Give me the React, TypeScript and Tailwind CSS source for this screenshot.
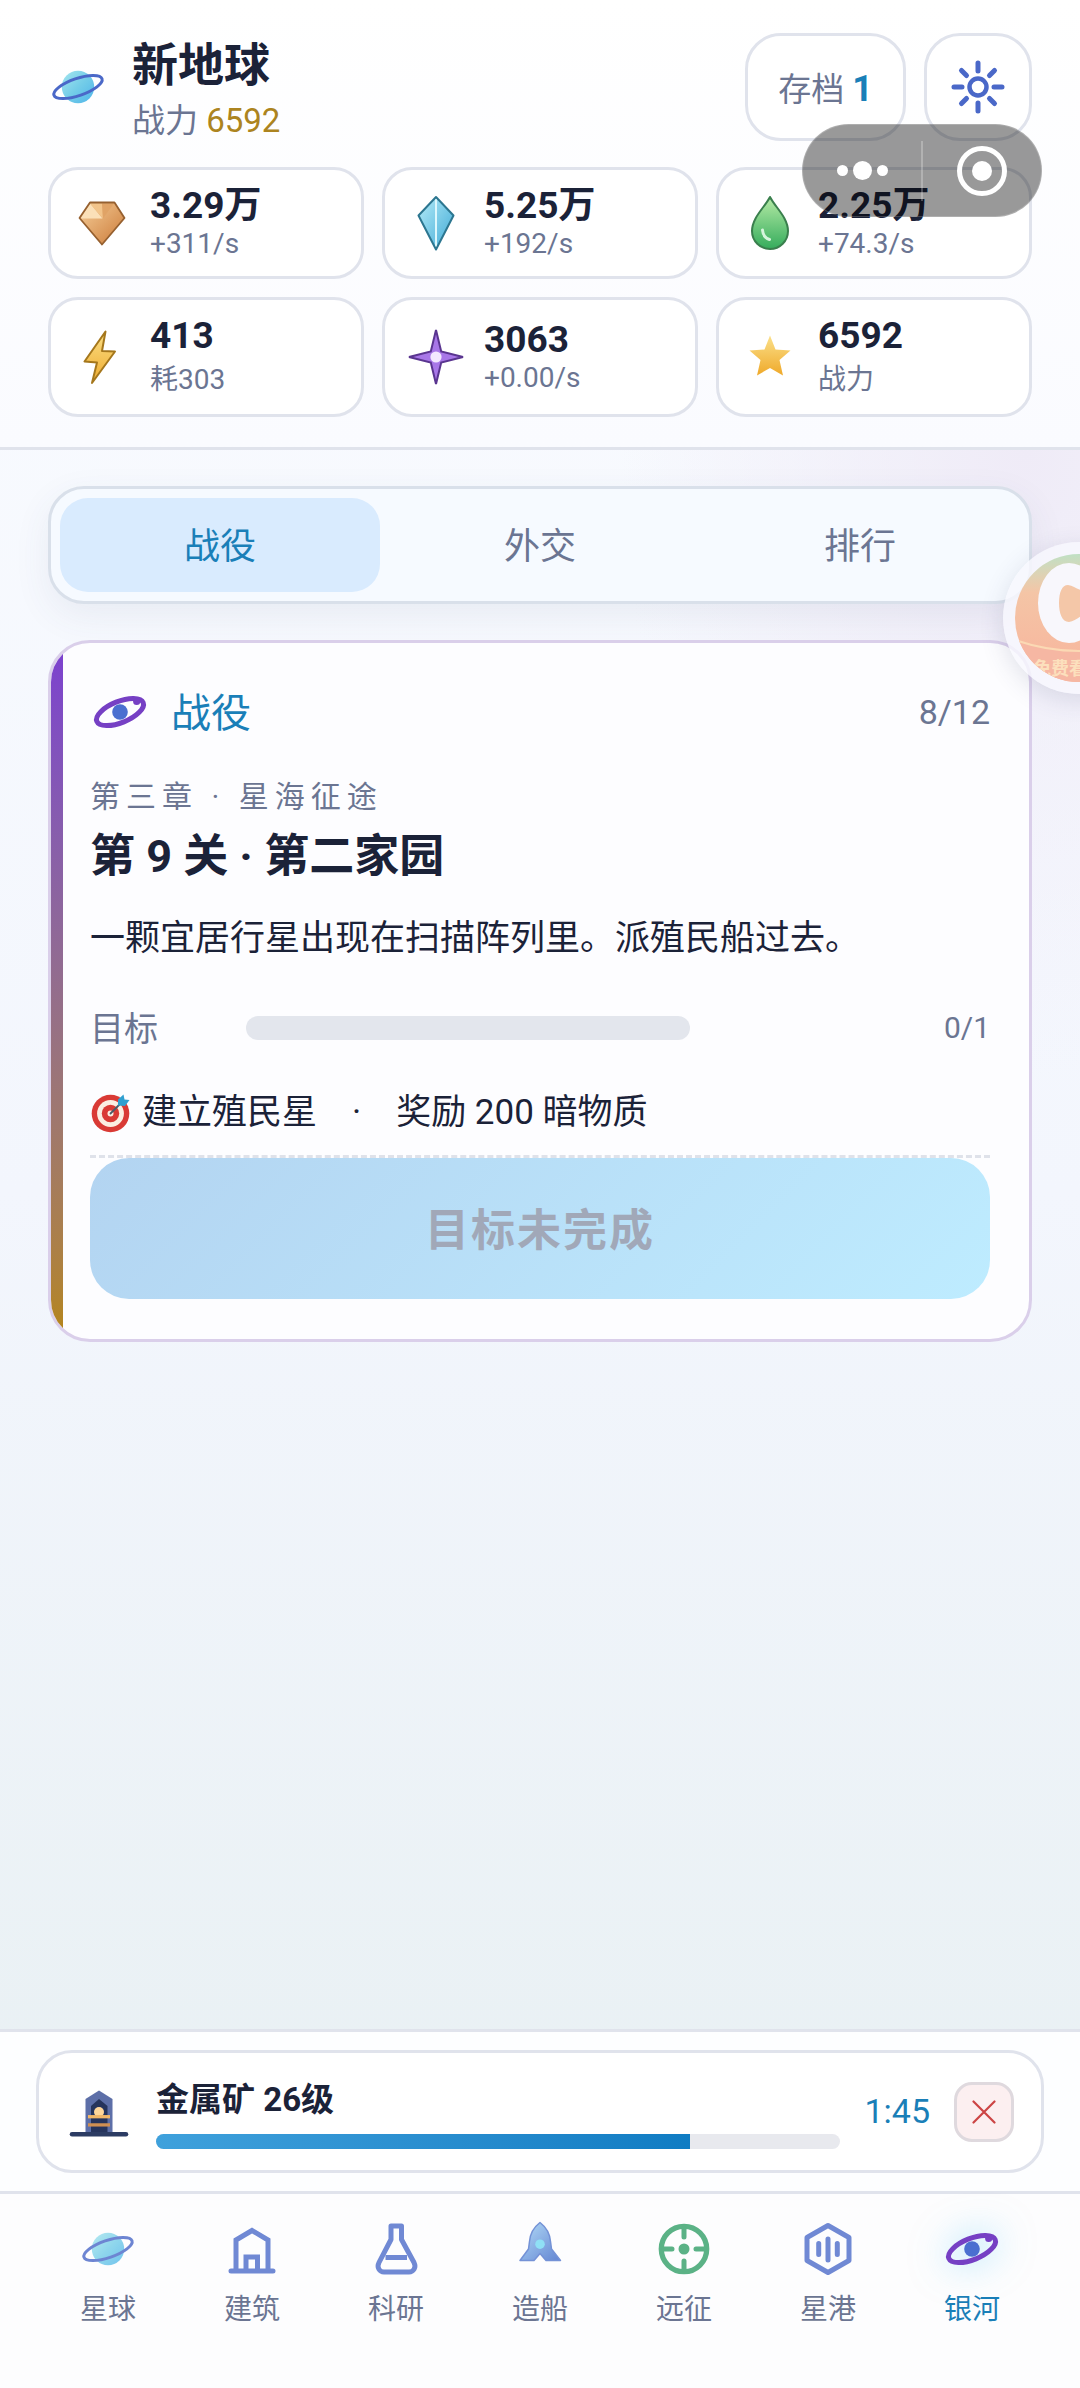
import React, { useState } from 'react'
import clsx from 'clsx'

type IconProps = { className?: string }

const Svg: React.FC<IconProps & { children: React.ReactNode }> = ({ className, children }) => (
  <svg viewBox="0 0 60 60" fill="none" aria-hidden="true" className={clsx('size-[60px] shrink-0 overflow-visible', className)}>
    {children}
  </svg>
)

const PlanetIcon: React.FC<IconProps> = ({ className }) => (
  <Svg className={className}>
    <defs>
      <linearGradient id="planet" x1="0" y1="0" x2="1" y2="1">
        <stop offset="0" stopColor="#a5e6ef" />
        <stop offset="0.5" stopColor="#74cde8" />
        <stop offset="1" stopColor="#4fb5ea" />
      </linearGradient>
    </defs>
    <circle cx="30" cy="30" r="16.2" fill="url(#planet)" />
    <ellipse cx="30" cy="30" rx="25.4" ry="8.6" transform="rotate(-19 30 30)" stroke="#4a68c8" strokeWidth="3" />
  </Svg>
)

const GalaxyIcon: React.FC<IconProps> = ({ className }) => (
  <Svg className={className}>
    <ellipse cx="30" cy="30" rx="25" ry="10.6" transform="rotate(-22 30 30)" stroke="#7640c4" strokeWidth="5" />
    <circle cx="30" cy="30" r="7.8" fill="#4a6fd0" />
    <circle cx="46.7" cy="19.5" r="3.6" fill="#7640c4" />
  </Svg>
)

const SunIcon = () => (
  <Svg>
    <g stroke="#4a68c8" strokeWidth="5" strokeLinecap="round">
      <circle cx="30" cy="30" r="8.5" strokeWidth="4.5" />
      <path d="M30 6v8M30 46v8M6 30h8M46 30h8M13.5 13.5l5 5M41.5 41.5l5 5M13.5 46.5l5-5M41.5 18.5l5-5" />
    </g>
  </Svg>
)

const MetalIcon = () => (
  <Svg>
    <defs>
      <linearGradient id="metal" x1="0" y1="0" x2="1" y2="1">
        <stop offset="0" stopColor="#f6cf9a" />
        <stop offset="1" stopColor="#cb7a38" />
      </linearGradient>
    </defs>
    <path d="M18 9.5h24.5l10 15.5L30 51.5 7.5 25z" fill="url(#metal)" />
    <path d="M18 10.5L8.5 25.5h22z" fill="#fbe0b8" />
    <path d="M18 10.5h12l1 15z" fill="#f2c48a" />
    <path d="M30 10.5h12L31 25.5z" fill="#e0a366" />
    <path d="M18 9.5h24.5l10 15.5L30 51.5 7.5 25z" stroke="#96602f" strokeWidth="1.8" strokeLinejoin="round" />
  </Svg>
)

const CrystalIcon = () => (
  <Svg>
    <defs>
      <linearGradient id="crystal" x1="0" y1="0" x2="1" y2="1">
        <stop offset="0" stopColor="#b5ecf8" />
        <stop offset="1" stopColor="#3fa9d6" />
      </linearGradient>
    </defs>
    <path d="M30 4l17.5 18.5L30 56.5 12.5 22.5z" fill="url(#crystal)" />
    <path d="M30 5v50" stroke="#dcf7fd" strokeWidth="2" />
    <path d="M30 4l17.5 18.5L30 56.5 12.5 22.5z" stroke="#2c7690" strokeWidth="2" strokeLinejoin="round" />
  </Svg>
)

const GasIcon = () => (
  <Svg>
    <defs>
      <linearGradient id="gas" x1="0" y1="0" x2="0" y2="1">
        <stop offset="0" stopColor="#b6eba6" />
        <stop offset="1" stopColor="#35ac5c" />
      </linearGradient>
    </defs>
    <path d="M30 4c5 10 18 20.5 18 34a18 18 0 0 1-36 0c0-13.5 13-24 18-34z" fill="url(#gas)" stroke="#3a7f4d" strokeWidth="2" strokeLinejoin="round" />
    <path d="M22.5 37c.3 4.5 2.5 8 7 9.5" stroke="#d5f5dc" strokeWidth="3" strokeLinecap="round" />
  </Svg>
)

const EnergyIcon = () => (
  <Svg>
    <defs>
      <linearGradient id="energy" x1="0" y1="0" x2="0" y2="1">
        <stop offset="0" stopColor="#fbdf86" />
        <stop offset="1" stopColor="#eeab2e" />
      </linearGradient>
    </defs>
    <path d="M33.5 4.5l-21 30 12.5 1-5 20.5 23-31.5-13-.5z" fill="url(#energy)" stroke="#a5771c" strokeWidth="2" strokeLinejoin="round" />
  </Svg>
)

const DarkMatterIcon = () => (
  <Svg>
    <path d="M30 3l5.2 21.5L57 30l-21.8 5.5L30 57l-5.2-21.5L3 30l21.8-5.5z" fill="#a877e8" stroke="#5a3590" strokeWidth="2" />
    <circle cx="30" cy="30" r="5.6" fill="#f3e8ff" />
  </Svg>
)

const PowerIcon = () => (
  <Svg>
    <defs>
      <linearGradient id="power" x1="0" y1="0" x2="0" y2="1">
        <stop offset="0" stopColor="#fbe08a" />
        <stop offset="1" stopColor="#efa92a" />
      </linearGradient>
    </defs>
    <path d="M30 8.5l5.5 14 15 1-11 9.5L43 48.500 30 41l-13 7.500L20.500 33l-11-9.500 15-1z" fill="url(#power)" />
  </Svg>
)

const MineIcon = () => (
  <Svg className="mx-[3px]">
    <g transform="translate(0 3.5)">
      <path d="M16.5 47V13.5L30 5l13.5 8.5V47z" fill="#5d6fa8" />
      <path d="M22 47V20.5l8-7 8.5 7V47z" fill="#26345c" />
      <circle cx="30" cy="26.5" r="5" fill="#ffd699" />
      <path d="M19 31.2h22" stroke="#f2b768" strokeWidth="3.3" />
      <path d="M19 39.4h22" stroke="#cf8f52" strokeWidth="3.3" />
      <path d="M3 48.8h54" stroke="#2c3c63" strokeWidth="4.5" strokeLinecap="round" />
    </g>
  </Svg>
)

const BuildIcon = () => (
  <Svg>
    <path d="M14 51V21l16-9.5L46 21v30M9 52h42M24 51V38h11.5v13" stroke="#7089d4" strokeWidth="5" strokeLinecap="round" />
  </Svg>
)

const ResearchIcon = () => (
  <Svg>
    <path d="M25 7h10.5v13.5L48 43.5c2.5 5-.5 9.5-5 9.5H18c-4.5 0-7.5-4.5-5-9.5l12-23z" stroke="#7089d4" strokeWidth="5" strokeLinejoin="round" />
    <path d="M19.5 38.5H41" stroke="#7089d4" strokeWidth="5" />
  </Svg>
)

const ShipIcon = () => (
  <Svg>
    <defs>
      <linearGradient id="ship" x1="0" y1="0" x2="1" y2="1">
        <stop offset="0" stopColor="#b4ddf8" />
        <stop offset="1" stopColor="#6385d2" />
      </linearGradient>
    </defs>
    <g transform="translate(0 8.5)">
      <path d="M30-5c6.500 5 10 12 10.500 19l1 7.500L50.500 33H36l-6-7-6 7H10l8.500-11.500 1-7.500C20 7 23.500 0 30-5z" fill="url(#ship)" stroke="#7492d6" strokeWidth="1.5" strokeLinejoin="round" />
      <circle cx="30" cy="16.7" r="4.8" fill="#8fe0f5" />
    </g>
  </Svg>
)

const ExpeditionIcon = () => (
  <Svg>
    <circle cx="30" cy="30" r="22.7" stroke="#5bb286" strokeWidth="5.3" />
    <path d="M30 10v8M30 42v8M10 30h8M42 30h8" stroke="#5bb286" strokeWidth="5" strokeLinecap="round" />
    <circle cx="30" cy="30" r="5.5" fill="#5bb286" />
  </Svg>
)

const PortIcon = () => (
  <Svg>
    <path d="M30 6.5l21 12v23l-21 12-21-12v-23z" stroke="#7089d4" strokeWidth="5" strokeLinejoin="round" />
    <path d="M20.7 24.5v11M30 20v21M39.3 24.5v11" stroke="#7089d4" strokeWidth="5" strokeLinecap="round" />
  </Svg>
)

const TargetIcon = () => (
  <svg viewBox="0 0 40 40" fill="none" aria-hidden="true" className="size-10 shrink-0">
    <circle cx="20.5" cy="20.5" r="18.8" fill="#d93a35" />
    <circle cx="20.5" cy="20.5" r="13.4" fill="#fbeee2" />
    <circle cx="20.5" cy="20.5" r="8.7" fill="#d93a35" />
    <circle cx="20.5" cy="20.5" r="3" fill="#fbeee2" />
    <path d="M20.5 20.5L31 10" stroke="#4a5a68" strokeWidth="1.8" strokeLinecap="round" />
    <path d="M28 12.5v-6l5.5-5 1 5 5 .5-4.5 6z" fill="#2f9fd0" />
  </svg>
)

const resources = [
  { id: 'metal', icon: <MetalIcon />, value: '3.29万', note: '+311/s' },
  { id: 'crystal', icon: <CrystalIcon />, value: '5.25万', note: '+192/s' },
  { id: 'gas', icon: <GasIcon />, value: '2.25万', note: '+74.3/s' },
  { id: 'energy', icon: <EnergyIcon />, value: '413', note: '耗303', tall: true },
  { id: 'dark', icon: <DarkMatterIcon />, value: '3063', note: '+0.00/s' },
  { id: 'power', icon: <PowerIcon />, value: '6592', note: '战力', tall: true },
]

const tabs = ['战役', '外交', '排行']

const navItems = [
  { label: '星球', icon: <PlanetIcon className="opacity-80" /> },
  { label: '建筑', icon: <BuildIcon /> },
  { label: '科研', icon: <ResearchIcon /> },
  { label: '造船', icon: <ShipIcon /> },
  { label: '远征', icon: <ExpeditionIcon /> },
  { label: '星港', icon: <PortIcon /> },
  { label: '银河', icon: <GalaxyIcon className="drop-shadow-[0_0_18px_rgba(56,189,248,0.5)]" /> },
]

const queue = { name: '金属矿 26级', left: '1:45', percent: 78 }

const Header = () => (
  <header className="border-b-3 border-[#e0e3ec] bg-linear-to-b from-white to-[#fafbff] px-12 pt-[33px] pb-[30px]">
    <div className="flex h-[108px] items-center justify-between">
      <div className="flex items-center gap-6">
        <PlanetIcon />
        <div className="pt-1">
          <h1 className="text-[46px] leading-[64px] font-bold">新地球</h1>
          <p className="text-[33px] leading-[48px] text-[#6b7592]">
            战力 <span className="text-[#ac8420]">6592</span>
          </p>
        </div>
      </div>
      <div className="flex gap-[18px]">
        <button className="h-[108px] rounded-[36px] border-3 border-[#e0e3ec] bg-white px-[30px] pt-1 text-[33px] text-[#6b7592]">
          存档 <b className="text-[36px] text-[#1a7fb8]">1</b>
        </button>
        <button aria-label="设置" className="flex size-[108px] items-center justify-center rounded-[36px] border-3 border-[#e0e3ec] bg-white">
          <SunIcon />
        </button>
      </div>
    </div>

    <div className="mt-[26px] grid grid-cols-3 gap-[18px]">
      {resources.map(item => (
        <div key={item.id} className="flex items-center gap-[18px] rounded-[30px] border-3 border-[#e0e3ec] bg-white px-[21px] py-[15px]">
          {item.icon}
          <div>
            <p className="text-[37px] leading-[42px] font-bold">{item.value}</p>
            <p className={clsx('text-[28px] text-[#6b7592]', item.tall ? 'pt-1 leading-[38px]' : 'leading-[34px]')}>{item.note}</p>
          </div>
        </div>
      ))}
    </div>
  </header>
)

const CampaignCard = () => (
  <section className="mt-9 flex overflow-hidden rounded-[42px] border-3 border-[#dacfea] bg-[#fdfdff]">
    <div className="w-3 shrink-0 bg-linear-to-b from-[#7c3fd0] to-[#b5850f]" />
    <div className="min-w-0 flex-1 pt-[39px] pr-[39px] pb-10 pl-[27px]">
      <div className="flex items-center justify-between">
        <div className="flex items-center gap-[21px]">
          <GalaxyIcon />
          <h2 className="pt-1 text-[40px] leading-[56px] text-[#1a7fb8]">战役</h2>
        </div>
        <span className="text-[34px] text-[#6b7592]">8/12</span>
      </div>

      <p className="mt-8 text-[30px] leading-[45px] tracking-[6px] text-[#6b7592]">第三章 · 星海征途</p>
      <h3 className="mt-2 text-[45px] leading-[60px] font-bold">第 9 关 · 第二家园</h3>
      <p className="mt-[25px] text-[35px] leading-[54px]">一颗宜居行星出现在扫描阵列里。派殖民船过去。</p>

      <div className="mt-[34px] grid h-12 grid-cols-[144px_1fr_288px] items-center gap-3 text-[#6b7592]">
        <span id="goal-label" className="pt-1 text-[34px]">目标</span>
        <div role="progressbar" aria-labelledby="goal-label" aria-valuenow={0} aria-valuemax={1} className="h-6 rounded-full bg-[#e3e6ed]" />
        <span className="text-right text-[30px]">0/1</span>
      </div>

      <div className="mt-[38px] flex items-center gap-3 border-b-3 border-dashed border-[#dfe2ea] pb-[15px] text-[35px] leading-[54px]">
        <TargetIcon />
        <p>建立殖民星　·　奖励 200 暗物质</p>
      </div>
      <button disabled className="h-[141px] w-full rounded-[39px] bg-linear-135 from-[#b3d4f1] to-[#beecff] pt-1 text-[44px] font-bold tracking-[2px] text-[#a1a8b8]">
        目标未完成
      </button>
    </div>
  </section>
)

const BuildQueue = () => (
  <section className="border-t-3 border-[#e0e3ec] bg-[#fdfeff] px-9 py-[18px]">
    <div className="flex h-[123px] items-center gap-6 rounded-[36px] border-3 border-[#e0e3ec] bg-white px-[27px]">
      <MineIcon />
      <div className="flex-1 pt-0.5">
        <p className="text-[33px] leading-[48px] font-bold">{queue.name}</p>
        <div className="mt-2.5 h-[15px] overflow-hidden rounded-full bg-[#e8e9ee]">
          <div className="h-full bg-linear-to-r from-[#3fa1dc] to-[#0f7cc3]" style={{ width: `${queue.percent}%` }} />
        </div>
      </div>
      <span className="text-[34px] text-[#1a7fb8]">{queue.left}</span>
      <button aria-label="取消" className="flex size-[60px] items-center justify-center rounded-[18px] border-3 border-[#dfd9de] bg-[#fceff0]">
        <svg viewBox="0 0 24 24" className="size-6" stroke="#cc4444" strokeWidth="2.2" strokeLinecap="round" aria-hidden="true">
          <path d="M1.5 1.5l21 21M22.5 1.5l-21 21" />
        </svg>
      </button>
    </div>
  </section>
)

const BottomNav = () => {
  const [current, setCurrent] = useState('银河')

  return (
    <nav className="grid grid-cols-7 border-t-3 border-[#e0e3ec] bg-[#fdfdfe] px-9 pt-[25px] pb-[57px]">
      {navItems.map(item => (
        <button
          key={item.label}
          onClick={() => setCurrent(item.label)}
          className={clsx('flex flex-col items-center gap-2.5 text-[28px] leading-[42px]', item.label === current ? 'text-[#1a7fb8]' : 'text-[#6b7592]')}
        >
          {item.icon}
          {item.label}
        </button>
      ))}
    </nav>
  )
}

// Host app capsule, floats over the header
const Capsule = () => (
  <div className="absolute top-[124px] right-[38px] flex h-[93px] w-60 items-center rounded-full border border-white/20 bg-black/40">
    <button aria-label="更多" className="flex flex-1 items-center justify-center gap-[5px]">
      <i className="size-[11px] rounded-full bg-white" />
      <i className="size-[19px] rounded-full bg-white" />
      <i className="size-[11px] rounded-full bg-white" />
    </button>
    <div className="h-[60px] w-[2px] bg-white/25" />
    <button aria-label="关闭" className="flex flex-1 items-center justify-center">
      <span className="flex size-[50px] items-center justify-center rounded-full border-5 border-white">
        <i className="size-5 rounded-full bg-white" />
      </span>
    </button>
  </div>
)

// Half hidden promo bubble on the right edge
const PromoBubble = () => (
  <button aria-label="免费看" className="absolute top-[542px] right-[-75px] flex size-[152px] items-center justify-center rounded-full bg-[#f8f8fe]/80 shadow-[0_6px_24px_rgba(60,70,110,0.15)]">
    <span className="relative size-32 overflow-hidden rounded-full bg-linear-to-b from-[#bfe0c4] via-[#f4c5a6] via-30% to-[#f8b39c]">
      <svg viewBox="0 0 128 128" fill="none" aria-hidden="true" className="size-full">
        <path d="M0 86q64 22 128 0v42H0z" fill="#f6b7a3" />
        <path d="M0 86q64 22 128 0" stroke="#fbd9b4" strokeWidth="2" />
        <ellipse cx="54" cy="49" rx="31" ry="40" fill="#f8f7fc" />
        <path d="M44 49c0-11 3-18 9-18 6 1 10 5 17 6v23c-5 2-10 7-16 8-7 0-10-9-10-19z" fill="#f4c7a8" />
      </svg>
      <span className="absolute inset-x-0 bottom-0 pl-[18px] text-left text-[18px] leading-[26px] font-bold text-[#fce0bd]">免费看</span>
    </span>
  </button>
)

const App: React.FC = () => {
  const [tab, setTab] = useState('战役')

  return (
    <div className="relative flex min-h-screen flex-col overflow-hidden bg-linear-to-b from-[#fafcff] via-[#f3f6fd] via-50% to-[#e6eff1] font-['Roboto','Noto_Sans_CJK_SC',sans-serif] text-[#1b2238]">
      <Header />

      <main className="flex-1 bg-radial-[at_95%_0%] from-[#efebf7] to-transparent to-28% px-12 py-9">
        <div role="tablist" className="grid grid-cols-3 rounded-[36px] border-3 border-[#d9e0ea] bg-[#f6faff] p-[9px] shadow-[0_12px_36px_rgba(60,80,120,0.08)]">
          {tabs.map(name => (
            <button
              key={name}
              role="tab"
              aria-selected={name === tab}
              onClick={() => setTab(name)}
              className={clsx('h-[94px] rounded-[28px] pt-1 text-[36px]', name === tab ? 'bg-[#d9ebfe] text-[#1a7fb8]' : 'text-[#6b7592]')}
            >
              {name}
            </button>
          ))}
        </div>
        <CampaignCard />
      </main>

      <BuildQueue />
      <BottomNav />
      <Capsule />
      <PromoBubble />
    </div>
  )
}

export default App
